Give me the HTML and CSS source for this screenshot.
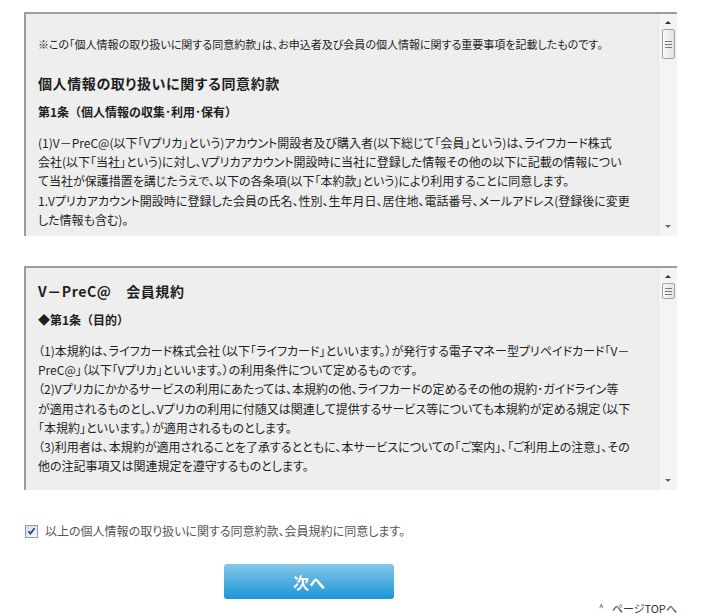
FILE: index.html
```html
<!DOCTYPE html>
<html lang="ja">
<head>
<meta charset="utf-8">
<title>同意約款</title>
<link rel="stylesheet" href="styles.css">
</head>
<body>
<div class="page">
  <div class="box">
    <div class="content">
      <p class="notice">※この「個人情報の取り扱いに関する同意約款」は、お申込者及び会員の個人情報に関する重要事項を記載したものです。</p>
      <h2 class="title">個人情報の取り扱いに関する同意約款</h2>
      <h3 class="article">第1条（個人情報の収集･利用･保有）</h3>
      <p class="para">(1)V－PreC@(以下「Vプリカ」という)アカウント開設者及び購入者(以下総じて「会員」という)は、ライフカード株式<br>会社(以下「当社」という)に対し、Vプリカアカウント開設時に当社に登録した情報その他の以下に記載の情報につい<br>て当社が保護措置を講じたうえで、以下の各条項(以下「本約款」という)により利用することに同意します。<br>1.Vプリカアカウント開設時に登録した会員の氏名、性別、生年月日、居住地、電話番号、メールアドレス(登録後に変更<br>した情報も含む)。</p>
    </div>
    <div class="scrollbar">
      <span class="arrow up"></span>
      <div class="track"><span class="thumb thumb-long"><i></i><i></i><i></i></span></div>
      <span class="arrow down"></span>
    </div>
  </div>

  <div class="box box2">
    <div class="content content2">
      <h2 class="title">V－PreC@　会員規約</h2>
      <h3 class="article">◆第1条（目的）</h3>
      <p class="para">（1)本規約は、ライフカード株式会社（以下「ライフカード」といいます。）が発行する電子マネー型プリペイドカード「V－<br>PreC@」（以下「Vプリカ」といいます。）の利用条件について定めるものです。<br>（2)Vプリカにかかるサービスの利用にあたっては、本規約の他、ライフカードの定めるその他の規約･ガイドライン等<br>が適用されるものとし、Vプリカの利用に付随又は関連して提供するサービス等についても本規約が定める規定（以下<br>「本規約」といいます。）が適用されるものとします。<br>（3)利用者は、本規約が適用されることを了承するとともに、本サービスについての「ご案内」、「ご利用上の注意」、その<br>他の注記事項又は関連規定を遵守するものとします。</p>
    </div>
    <div class="scrollbar">
      <span class="arrow up"></span>
      <div class="track"><span class="thumb thumb-short"><i></i><i></i><i></i></span></div>
      <span class="arrow down"></span>
    </div>
  </div>

  <label class="agree">
    <span class="check">
      <svg width="11" height="11" viewBox="0 0 11 11"><path d="M2.5 5.2 L4.4 7.6 L8.6 2.2" fill="none" stroke="#2a3f9a" stroke-width="1.8"/></svg>
    </span>
    <span class="agree-text">以上の個人情報の取り扱いに関する同意約款、会員規約に同意します。</span>
  </label>

  <div class="actions">
    <button class="next" type="button">次へ</button>
  </div>

  <div class="pagetop"><span class="caret">^</span>ページTOPへ</div>
</div>
</body>
</html>
```

FILE: styles.css
```css
html, body {
  margin: 0;
  padding: 0;
  background: #ffffff;
}
body {
  font-family: "Noto Sans CJK JP", "Liberation Sans", sans-serif;
  color: #1e1e1e;
  font-feature-settings: "palt";
}
.page {
  width: 653px;
  padding: 12px 0 0 24px;
}
.box {
  display: flex;
  height: 222px;
  border-top: 2px solid #9c9c9c;
  border-left: 2px solid #9c9c9c;
  background: #eeeeee;
  overflow: hidden;
}
.box2 {
  margin-top: 30px;
}
.content {
  flex: 1;
  padding: 21px 12px 0 12px;
  overflow: hidden;
}
.content2 {
  padding-top: 13px;
}
.notice {
  margin: 0;
  font-size: 11px;
  line-height: 18px;
}
.title {
  margin: 20px 0 9px;
  font-size: 14px;
  line-height: 20px;
  font-weight: bold;
  letter-spacing: 0.6px;
}
.content2 .title {
  margin-top: 0;
}
.article {
  margin: 0 0 11px;
  font-size: 12px;
  line-height: 20px;
  font-weight: bold;
  font-feature-settings: normal;
}
.para {
  margin: 0;
  font-size: 12px;
  line-height: 19.2px;
  white-space: nowrap;
}
.scrollbar {
  width: 18px;
  flex: none;
  display: flex;
  flex-direction: column;
  align-items: center;
  background: #f4f4f4;
  border-left: 1px solid #e6e6e6;
}
.arrow {
  width: 0;
  height: 0;
  border-left: 3px solid transparent;
  border-right: 3px solid transparent;
  margin: 7px 0 5px;
}
.arrow.up {
  border-bottom: 3px solid #333;
}
.arrow.down {
  border-top: 3px solid #666;
  margin: 6px 0 8px;
}
.track {
  flex: 1;
  width: 100%;
  display: flex;
  justify-content: center;
}
.thumb {
  width: 13px;
  border: 1px solid #a4a4a4;
  border-radius: 2px;
  background: linear-gradient(to right, #f8f8f8, #e2e2e2);
  display: flex;
  flex-direction: column;
  justify-content: center;
  align-items: center;
  gap: 2px;
  box-sizing: border-box;
}
.thumb i {
  display: block;
  width: 7px;
  height: 1px;
  background: #7a7a7a;
}
.thumb-long {
  height: 30px;
}
.thumb-short {
  height: 16px;
}
.agree {
  display: flex;
  align-items: center;
  gap: 7px;
  margin-top: 33px;
  margin-left: 1px;
}
.check {
  width: 11px;
  height: 11px;
  border: 1px solid #8ba0b6;
  background: linear-gradient(to bottom right, #d6dde6, #f6f8fb);
  display: flex;
  box-sizing: content-box;
}
.agree-text {
  font-size: 12px;
  line-height: 16px;
  color: #555;
}
.actions {
  display: flex;
  margin-top: 25px;
  padding-left: 200px;
}
.next {
  width: 170px;
  height: 35px;
  border: none;
  border-radius: 3px;
  background: linear-gradient(to bottom, #85c8ea, #1a95d5);
  color: #fff;
  font-family: "Noto Sans CJK JP", sans-serif;
  font-size: 16px;
  font-weight: bold;
  text-shadow: 0 0 1px rgba(0,0,0,0.2);
  padding: 0;
}
.pagetop {
  display: flex;
  justify-content: flex-end;
  align-items: center;
  margin-top: 3px;
  font-size: 11px;
  line-height: 12px;
  color: #333;
}
.caret {
  font-size: 9px;
  margin-right: 8px;
}
```
